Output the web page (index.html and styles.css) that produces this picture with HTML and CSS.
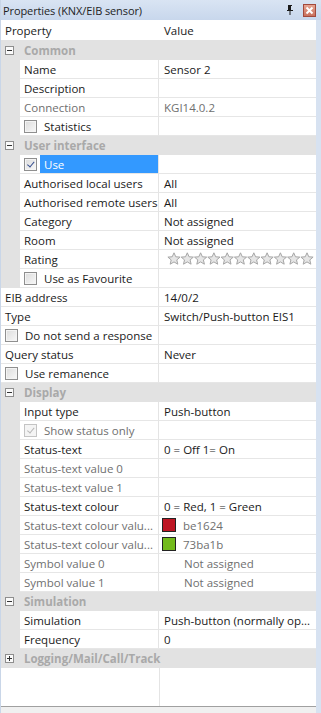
FILE: index.html
```html
<!DOCTYPE html>
<html>
<head>
<meta charset="utf-8">
<link rel="stylesheet" href="styles.css">
</head>
<body>
<div class="panel">
  <div class="titlebar">
    <span class="title">Properties (KNX/EIB sensor)</span>
    <svg class="pin" width="8" height="10" viewBox="0 0 8 10"><path d="M2 0h4v1h-1v4h2v1h-2.5v4h-1v-4h-2.5v-1h2v-4h-1z" fill="#1a1a1a"/><rect x="2" y="1" width="1" height="4" fill="#1a1a1a"/></svg>
    <span class="close"><svg width="9" height="9" viewBox="0 0 9 9"><path d="M1.5 1.5l6 6M7.5 1.5l-6 6" stroke="#fff" stroke-width="2"/></svg></span>
  </div>
  <div class="grid">
    <div class="head"><div class="hname">Property</div><div class="hval">Value</div></div>

    <div class="group"><span class="exp minus"></span><span class="glabel">Common</span></div>
    <div class="row sub"><div class="name">Name</div><div class="val">Sensor 2</div></div>
    <div class="row sub"><div class="name">Description</div><div class="val"></div></div>
    <div class="row sub dis"><div class="name">Connection</div><div class="val">KGI14.0.2</div></div>
    <div class="row sub"><div class="name"><span class="cb"></span><span class="cblabel">Statistics</span></div><div class="val"></div></div>

    <div class="group"><span class="exp minus"></span><span class="glabel">User interface</span></div>
    <div class="row sub"><div class="name sel"><span class="cb checked"></span><span class="cblabel sellabel">Use</span></div><div class="val"></div></div>
    <div class="row sub"><div class="name">Authorised local users</div><div class="val">All</div></div>
    <div class="row sub"><div class="name">Authorised remote users</div><div class="val">All</div></div>
    <div class="row sub"><div class="name">Category</div><div class="val">Not assigned</div></div>
    <div class="row sub"><div class="name">Room</div><div class="val">Not assigned</div></div>
    <div class="row sub"><div class="name">Rating</div><div class="val stars">
      <svg width="148" height="14" viewBox="0 0 148 14">
        <defs><path id="st" d="M6.5 0.8l1.8 4 4.3.3-3.3 2.8 1 4.3-3.8-2.3-3.8 2.3 1-4.3-3.3-2.8 4.3-.3z"/></defs>
        <g fill="#e6e6e6" stroke="#a6a6a6" stroke-width="1">
          <use href="#st" x="0.5"/><use href="#st" x="13.8"/><use href="#st" x="27.1"/><use href="#st" x="40.4"/><use href="#st" x="53.7"/><use href="#st" x="67"/><use href="#st" x="80.3"/><use href="#st" x="93.6"/><use href="#st" x="106.9"/><use href="#st" x="120.2"/><use href="#st" x="133.5"/>
        </g>
      </svg>
    </div></div>
    <div class="row sub"><div class="name"><span class="cb"></span><span class="cblabel">Use as Favourite</span></div><div class="val"></div></div>

    <div class="row top"><div class="name">EIB address</div><div class="val">14/0/2</div></div>
    <div class="row top"><div class="name">Type</div><div class="val">Switch/Push-button EIS1</div></div>
    <div class="row top"><div class="name"><span class="cb"></span><span class="cblabel">Do not send a response</span></div><div class="val"></div></div>
    <div class="row top"><div class="name">Query status</div><div class="val">Never</div></div>
    <div class="row top"><div class="name"><span class="cb"></span><span class="cblabel">Use remanence</span></div><div class="val"></div></div>

    <div class="group"><span class="exp minus"></span><span class="glabel">Display</span></div>
    <div class="row sub"><div class="name">Input type</div><div class="val">Push-button</div></div>
    <div class="row sub dis"><div class="name"><span class="cb checked disabled"></span><span class="cblabel">Show status only</span></div><div class="val"></div></div>
    <div class="row sub"><div class="name">Status-text</div><div class="val">0 = Off 1= On</div></div>
    <div class="row sub dis"><div class="name">Status-text value 0</div><div class="val"></div></div>
    <div class="row sub dis"><div class="name">Status-text value 1</div><div class="val"></div></div>
    <div class="row sub"><div class="name">Status-text colour</div><div class="val">0 = Red, 1 = Green</div></div>
    <div class="row sub dis"><div class="name">Status-text colour valu...</div><div class="val"><span class="swatch red"></span>be1624</div></div>
    <div class="row sub dis"><div class="name">Status-text colour valu...</div><div class="val"><span class="swatch green"></span>73ba1b</div></div>
    <div class="row sub dis"><div class="name">Symbol value 0</div><div class="val indent">Not assigned</div></div>
    <div class="row sub dis"><div class="name">Symbol value 1</div><div class="val indent">Not assigned</div></div>

    <div class="group"><span class="exp minus"></span><span class="glabel">Simulation</span></div>
    <div class="row sub"><div class="name">Simulation</div><div class="val">Push-button (normally op...</div></div>
    <div class="row sub"><div class="name">Frequency</div><div class="val">0</div></div>

    <div class="group"><span class="exp plus"></span><span class="glabel">Logging/Mail/Call/Track</span></div>
    <div class="blank"></div>
  </div>
  <div class="footer"></div>
</div>
</body>
</html>
```

FILE: styles.css
```css
html, body {
  margin: 0;
  padding: 0;
  background: #ffffff;
}
.panel {
  width: 321px;
  height: 713px;
  display: flex;
  flex-direction: column;
  font-family: "Open Sans", "Noto Sans", sans-serif;
  font-size: 11.5px;
  color: #1a1a1a;
  box-sizing: border-box;
  border-left: 1px solid #c9d6e8;
  background: #d7e2f1;
  overflow: hidden;
}
.titlebar {
  height: 20px;
  flex: none;
  display: flex;
  align-items: center;
  padding-left: 2px;
  background: linear-gradient(#d9e4f3, #c8d7ec);
  color: #1e1e1e;
}
.title {
  flex: 1;
  font-size: 11px;
  letter-spacing: -0.1px;
}
.pin {
  margin-right: 9px;
}
.close {
  width: 13px;
  height: 13px;
  box-sizing: border-box;
  margin-right: 5px;
  border: 1px solid #a2493c;
  background: linear-gradient(#e6a593, #c9705c);
  display: flex;
  align-items: center;
  justify-content: center;
}
.grid {
  flex: 1;
  display: flex;
  flex-direction: column;
  margin-right: 5px;
  background: #ffffff linear-gradient(90deg, transparent 158px, #e4e4e4 158px, #e4e4e4 159px, transparent 159px);
}
.head {
  height: 21px;
  flex: none;
  box-sizing: border-box;
  display: flex;
  align-items: center;
  background: #ffffff;
  border-bottom: 1px solid #e2e2e2;
}
.hname {
  width: 158px;
  padding-left: 4px;
  box-sizing: border-box;
}
.hval {
  padding-left: 5px;
}
.group {
  height: 19px;
  flex: none;
  display: flex;
  align-items: center;
  background: #e2e2e2;
  box-sizing: border-box;
}
.exp {
  width: 9px;
  height: 9px;
  box-sizing: border-box;
  border: 1px solid #8e8e8e;
  background: #fafafa;
  margin-left: 4px;
  margin-right: 10px;
  position: relative;
}
.exp::before {
  content: "";
  position: absolute;
  left: 1px;
  top: 3px;
  width: 5px;
  height: 1px;
  background: #333;
}
.exp.plus::after {
  content: "";
  position: absolute;
  left: 3px;
  top: 1px;
  width: 1px;
  height: 5px;
  background: #333;
}
.glabel {
  font-weight: 700;
  color: #a9a9a9;
}
.row {
  height: 19px;
  flex: none;
  display: flex;
  box-sizing: border-box;
}
.row.sub {
  padding-left: 19px;
  background: #e2e2e2;
}
.row .name {
  width: 139px;
  box-sizing: border-box;
  padding-left: 4px;
  background: #ffffff;
  border-bottom: 1px solid #e6e6e6;
  border-right: 1px solid #e4e4e4;
  display: flex;
  align-items: center;
  white-space: nowrap;
  overflow: hidden;
}
.row.top .name {
  width: 158px;
}
.row .val {
  flex: 1;
  box-sizing: border-box;
  padding-left: 5px;
  background: #ffffff;
  border-bottom: 1px solid #e6e6e6;
  display: flex;
  align-items: center;
  white-space: nowrap;
  overflow: hidden;
}
.row.dis .name,
.row.dis .val {
  color: #6f6f6f;
}
.val.indent {
  padding-left: 25px;
}
.val.stars {
  padding-left: 8px;
}
.name.sel {
  padding-left: 0;
}
.cb {
  width: 13px;
  height: 13px;
  box-sizing: border-box;
  border: 1px solid #8f8f8f;
  background: linear-gradient(135deg, #dcdcdc, #f8f8f8);
  box-shadow: inset 0 0 0 1px #f4f4f4;
  flex: none;
  position: relative;
}
.name.sel .cb {
  margin-left: 4px;
}
.cb.checked::after {
  content: "";
  position: absolute;
  left: 3.5px;
  top: 1px;
  width: 2.5px;
  height: 5.5px;
  border-right: 1.6px solid #38508f;
  border-bottom: 1.6px solid #38508f;
  transform: rotate(40deg);
}
.cb.disabled {
  border-color: #c4c4c4;
  background: #f4f4f4;
}
.cb.disabled::after {
  border-color: #b8b8b8;
}
.cblabel {
  margin-left: 7px;
}
.sellabel {
  margin-left: 3px;
  padding-left: 4px;
  background: #3399ff;
  color: #ffffff;
  align-self: stretch;
  display: flex;
  align-items: center;
  flex: 1;
}
.swatch {
  width: 14px;
  height: 14px;
  box-sizing: border-box;
  border: 1px solid #222;
  margin-left: -2px;
  margin-right: 7px;
  flex: none;
}
.swatch.red {
  background: #be1624;
}
.swatch.green {
  background: #73ba1b;
}
.blank {
  flex: 1;
}
.footer {
  height: 7px;
  flex: none;
  box-sizing: border-box;
  margin-right: 5px;
  border-top: 1px solid #a0a0a0;
  background: #f0f0f0;
}
```
